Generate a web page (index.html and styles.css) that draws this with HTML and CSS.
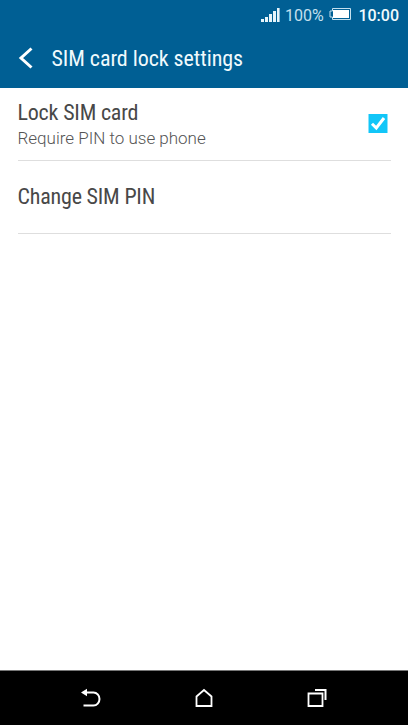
FILE: index.html
```
<!DOCTYPE html>
<html lang="en">
<head>
    <meta charset="UTF-8" />
    <meta name="viewport" content="width=device-width, initial-scale=1.0" />
    <title>SIM card lock settings</title>
    <link rel="stylesheet" href="styles.css">
</head>
<body>

<header class="header">
    <div class="status-bar">
        <svg class="signal" width="19" height="14" viewBox="0 0 19 14" fill="#e6f4fa">
            <path d="M0 11h3v3H0zM4 9h3v5H4zM8 6h3v8H8zM12 3h3v11h-3zM16 0h2.6v14H16z" />
        </svg>
        <span class="percent">100%</span>
        <svg class="battery" width="22" height="12" viewBox="0 0 22 12">
            <path d="M3.5 .5h18v11h-18v-2.500h-2.500v-6h2.500z" fill="none" stroke="#c4e0ee" />
            <path d="M4 2h16v8H4z" fill="#fff" />
        </svg>
        <span class="clock">10:00</span>
    </div>
    <div class="title-bar">
        <svg class="back" width="15" height="22" viewBox="0 0 15 22">
            <path d="M13.500 1.500L3 11l10.500 9.500" fill="none" stroke="#fff" stroke-width="3" />
        </svg>
        <h1>SIM card lock settings</h1>
    </div>
</header>

<main class="settings">
    <label class="row">
        <span class="text">
            <span class="name">Lock SIM card</span>
            <span class="summary">Require PIN to use phone</span>
        </span>
        <svg class="checkbox" width="20" height="20" viewBox="0 0 20 20">
            <path d="M.5 0h19v19H.5z" fill="#12c6f8" />
            <path d="M4 9.700l4.300 4.300 7.700-10" fill="none" stroke="#fff" stroke-width="3" />
        </svg>
    </label>
    <div class="row">
        <span class="name">Change SIM PIN</span>
    </div>
</main>

<nav class="nav-bar">
    <svg width="20" height="20" viewBox="0 0 20 20">
        <path d="M4 4.500h8.500a6 6.500 0 0 1 0 13H2.500" fill="none" stroke="#fff" stroke-width="2" />
        <path d="M0 4.500L6 .8v7.400z" fill="#fff" />
    </svg>
    <svg width="20" height="20" viewBox="0 0 20 20">
        <path d="M2.500 8.500L10 2l7.500 6.500v9.500h-15z" fill="none" stroke="#fff" stroke-width="1.800" />
    </svg>
    <svg width="20" height="20" viewBox="0 0 20 20">
        <path d="M1.500 5.500h14v12.500h-14z" fill="none" stroke="#fff" stroke-width="1.800" />
        <path d="M8 2h10.500v10" fill="none" stroke="#fff" stroke-width="2" />
    </svg>
</nav>

</body>
</html>
```

FILE: styles.css
```
* {
    box-sizing: border-box;
    margin: 0;
    padding: 0;
}

body {
    font-family: Roboto, "Liberation Sans", sans-serif;
    background: #fff;
    display: flex;
    flex-direction: column;
    height: 100vh;
    overflow: hidden;
}

.header {
    height: 88px;
    background-color: #005f94;
    color: #f0fafd;
}

.status-bar {
    display: flex;
    align-items: center;
    height: 30px;
    padding: 0 9px 0 261px;
    font-size: 16px;
    white-space: nowrap;
}

.signal {
    flex: none;
    margin-right: 5px;
}

.percent {
    width: 39px;
    color: #c4e0ee;
}

.battery {
    flex: none;
    margin-left: 5px;
    margin-top: -2px;
}

.clock {
    margin-left: auto;
    font-weight: 500;
}

.title-bar {
    display: flex;
    align-items: center;
    height: 56px;
    padding-left: 18px;
}

.back {
    margin-right: 18.5px;
}

h1,
.name {
    font-family: "Roboto Condensed", Roboto, sans-serif;
    font-stretch: 75%;
    font-size: 22px;
    font-weight: 400;
    line-height: 26px;
    white-space: nowrap;
}

h1 {
    padding-top: 2px;
    letter-spacing: -0.06px;
}

.settings {
    flex: 1;
    padding: 0 17px 0 17.5px;
}

.row {
    display: flex;
    align-items: center;
    justify-content: space-between;
    height: 73px;
    padding-right: 3px;
    border-bottom: 1px solid #dedede;
}

.text {
    display: flex;
    flex-direction: column;
    padding-top: 2px;
}

.name {
    color: #484848;
    letter-spacing: -0.2px;
}

.summary {
    font-size: 17px;
    font-weight: 300;
    line-height: 25px;
    color: #555;
}

.nav-bar {
    display: flex;
    align-items: center;
    justify-content: space-between;
    height: 55px;
    padding: 0 81px;
    background-color: #000;
    border-top: 1px solid #777;
}
```
